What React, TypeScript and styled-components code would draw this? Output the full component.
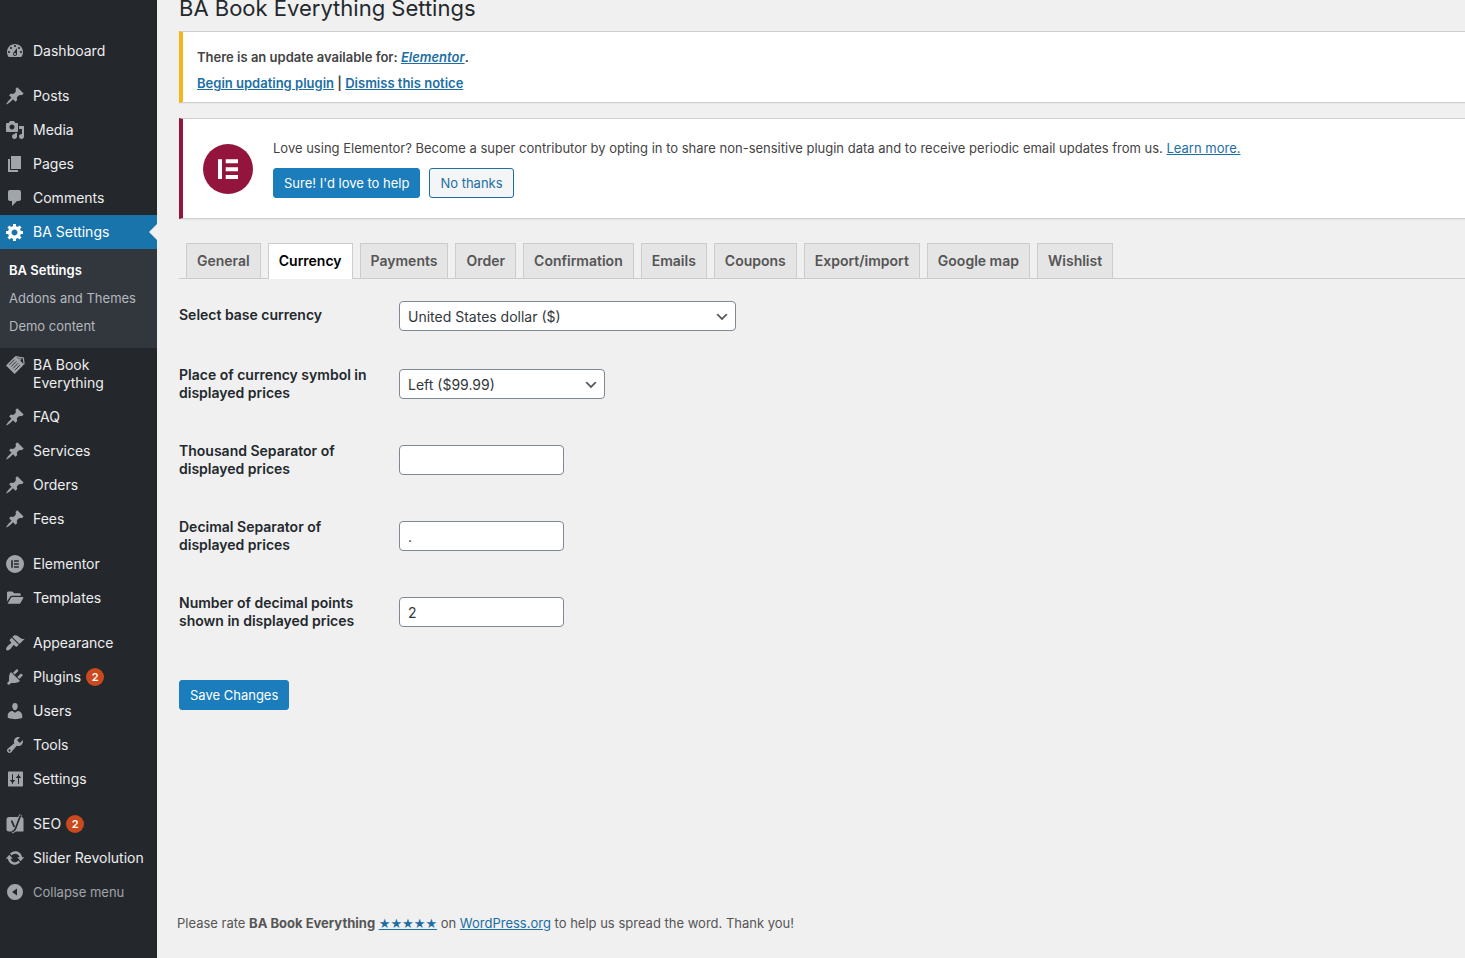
import React from "react";
import styled, { createGlobalStyle, css } from "styled-components";

const GlobalStyle = createGlobalStyle`
  *, *::before, *::after { box-sizing: border-box; }
  body {
    margin: 0;
    background: #f0f0f0;
    color: #444;
    font-family: Inter, "Liberation Sans", sans-serif;
    font-size: 13px;
    line-height: 20px;
  }
  a { color: #1c6ea4; }
`;

const Shell = styled.div`
  display: flex;
  min-height: 100vh;
`;

/* ---------- Sidebar ---------- */

const Sidebar = styled.nav`
  flex: none;
  width: 157px;
  padding-top: 34px;
  background: #24282d;
`;

const MenuList = styled.ul`
  margin: 0;
  padding: 0;
  list-style: none;
`;

const MenuItem = styled.li<{ $spaced?: boolean }>`
  margin-top: ${(p) => (p.$spaced ? "11px" : "0")};
`;

const menuEntry = css`
  position: relative;
  display: flex;
  align-items: flex-start;
  gap: 8px;
  width: 100%;
  padding: 8px 8px 8px 5px;
  font-family: inherit;
  font-size: 14px;
  line-height: 18px;
  text-align: left;
  text-decoration: none;
`;

const MenuLink = styled.a<{ $active?: boolean }>`
  ${menuEntry}
  color: ${(p) => (p.$active ? "#fff" : "#eee")};
  background: ${(p) => (p.$active ? "#1874ab" : "transparent")};

  svg { color: ${(p) => (p.$active ? "#fff" : "#a0a5aa")}; }

  &::after {
    content: "";
    display: ${(p) => (p.$active ? "block" : "none")};
    position: absolute;
    top: 9px;
    right: 0;
    border: 8px solid transparent;
    border-left-width: 0;
    border-right-color: #f0f0f0;
  }
`;

const CollapseButton = styled.button`
  ${menuEntry}
  border: 0;
  background: transparent;
  color: #a0a5aa;
  font-size: 13px;
`;

const MenuIcon = styled.svg`
  flex: none;
  display: block;
  width: 20px;
  height: 20px;
  margin: -1px 0;
  fill: currentColor;
`;

const MenuText = styled.span`
  display: flex;
  align-items: center;
  gap: 5px;
`;

const Badge = styled.span`
  width: 18px;
  height: 18px;
  border-radius: 9px;
  background: #ca4a1f;
  color: #fff;
  font-size: 11px;
  font-weight: 600;
  text-align: center;
`;

const SubMenu = styled.ul`
  margin: 0;
  padding: 7px 0 8px;
  list-style: none;
  background: #32363d;
`;

const SubLink = styled.a<{ $current?: boolean }>`
  display: block;
  padding: 5px 9px;
  line-height: 18px;
  text-decoration: none;
  color: ${(p) => (p.$current ? "#fff" : "#b4b9be")};
  font-weight: ${(p) => (p.$current ? 600 : 400)};
`;

/* ---------- Content ---------- */

const Main = styled.main`
  display: flex;
  flex: 1;
  flex-direction: column;
  min-width: 0;
  padding-left: 22px;
`;

const Title = styled.h1`
  margin: 0 0 15px;
  color: #23282d;
  font-size: 22px;
  font-weight: 400;
  line-height: 16px;
`;

const Notice = styled.section<{ $accent: string }>`
  border: 1px solid #ccd0d4;
  border-right: 0;
  border-left: 4px solid ${(p) => p.$accent};
  background: #fff;
  box-shadow: 0 1px 1px rgba(0, 0, 0, 0.04);
`;

const UpdateNotice = styled(Notice)`
  margin-bottom: 15px;
  padding: 15px 14px 3px;
  font-weight: 600;

  p { margin: 0 0 6px; }
`;

const TrackingNotice = styled(Notice)`
  display: flex;
  gap: 20px;
  margin-bottom: 24px;
  padding: 19px 20px 20px;
`;

const BrandMark = styled.svg`
  flex: none;
  width: 50px;
  height: 50px;
  margin-top: 6px;
`;

const NoticeBody = styled.div`
  p { margin: 0 0 10px; }
`;

const Actions = styled.div`
  display: flex;
  gap: 9px;
`;

const Button = styled.button<{ $primary?: boolean }>`
  height: 30px;
  padding: 0 10px;
  border: 1px solid ${(p) => (p.$primary ? "#1b7dbb" : "#1c6ea4")};
  border-radius: 3px;
  background: ${(p) => (p.$primary ? "#1b7dbb" : "#f3f5f6")};
  color: ${(p) => (p.$primary ? "#fff" : "#1c6ea4")};
  font-family: inherit;
  font-size: 13px;
  font-weight: 400;
  line-height: 20px;
`;

const Tabs = styled.nav`
  display: flex;
  gap: 7px;
  padding-left: 7px;
  border-bottom: 1px solid #ccc;
`;

const Tab = styled.a<{ $active?: boolean }>`
  margin-bottom: ${(p) => (p.$active ? "-1px" : "0")};
  padding: 7px 10px ${(p) => (p.$active ? "8px" : "7px")};
  border: 1px solid #ccc;
  border-bottom: 0;
  background: ${(p) => (p.$active ? "#fff" : "#e5e5e5")};
  color: ${(p) => (p.$active ? "#000" : "#555")};
  font-size: 14px;
  font-weight: 600;
  text-decoration: none;
  white-space: nowrap;
`;

const Form = styled.form`
  padding-top: 7px;
`;

const Field = styled.div`
  display: grid;
  grid-template-columns: 220px 1fr;
`;

const Label = styled.label`
  padding: 20px 10px 20px 0;
  color: #23282d;
  font-size: 14px;
  font-weight: 600;
  line-height: 18px;
`;

const Control = styled.div`
  align-self: center;
  padding: 15px 0;
`;

const box = css`
  display: block;
  width: 100%;
  height: 30px;
  padding: 0 8px;
  border: 1px solid #7e8993;
  border-radius: 4px;
  background: #fff;
  color: #32373c;
  font-family: inherit;
  font-size: 14px;
`;

const TextInput = styled.input`
  ${box}
  width: 165px;
`;

const SelectWrap = styled.div<{ $width: number }>`
  position: relative;
  width: ${(p) => p.$width}px;
`;

const Select = styled.select`
  ${box}
  appearance: none;
`;

const Chevron = styled.svg`
  position: absolute;
  top: 8px;
  right: 6px;
  width: 16px;
  height: 16px;
  fill: #555;
  pointer-events: none;
`;

const Submit = styled.div`
  padding: 30px 0;
`;

const Footer = styled.footer`
  margin: auto 0 0 -2px;
  padding-bottom: 24px;
  color: #555;
`;

const Stars = styled.a`
  font-family: "DejaVu Sans", sans-serif;
`;

/* ---------- Icons ---------- */

const icons: Record<string, React.ReactNode> = {
  dashboard: (
    <path d="M3.76 16h12.48c1.1-1.37 1.76-3.11 1.76-5 0-4.42-3.58-8-8-8s-8 3.58-8 8c0 1.89.66 3.63 1.76 5zM10 4c.55 0 1 .45 1 1s-.45 1-1 1-1-.45-1-1 .45-1 1-1zM6 6c.55 0 1 .45 1 1s-.45 1-1 1-1-.45-1-1 .45-1 1-1zm8 0c.55 0 1 .45 1 1s-.45 1-1 1-1-.45-1-1 .45-1 1-1zm-5.37 5.55L12 7v6c0 1.1-.9 2-2 2s-2-.9-2-2c0-.57.24-1.08.63-1.45zM4 10c.55 0 1 .45 1 1s-.45 1-1 1-1-.45-1-1 .45-1 1-1zm12 0c.55 0 1 .45 1 1s-.45 1-1 1-1-.45-1-1 .45-1 1-1zm-5 3c0-.55-.45-1-1-1s-1 .45-1 1 .45 1 1 1 1-.45 1-1z" />
  ),
  pin: (
    <path d="M10.44 3.02l1.82-1.82 6.36 6.35-1.83 1.82c-1.05-.68-2.48-.57-3.41.36l-.75.75c-.92.93-1.04 2.35-.35 3.41l-1.83 1.82-2.41-2.41-2.8 2.79c-.42.42-3.38 2.71-3.8 2.29s1.86-3.39 2.28-3.81l2.79-2.79L4.1 9.36l1.83-1.82c1.05.69 2.48.57 3.4-.36l.75-.75c.93-.92 1.05-2.35.36-3.41z" />
  ),
  media: (
    <path d="M13 11V4c0-.55-.45-1-1-1h-1.67L9 1H5L3.67 3H2c-.55 0-1 .45-1 1v7c0 .55.45 1 1 1h10c.55 0 1-.45 1-1zM7 4.5c1.38 0 2.5 1.12 2.5 2.5S8.38 9.5 7 9.5 4.5 8.38 4.5 7 5.62 4.5 7 4.5zM14 6h5v10.5c0 1.38-1.12 2.5-2.5 2.5S14 17.88 14 16.5s1.12-2.5 2.5-2.5c.17 0 .34.02.5.05V9h-3V6zm-4 8.05V13h2v3.5c0 1.38-1.12 2.5-2.5 2.5S7 17.88 7 16.5 8.12 14 9.5 14c.17 0 .34.02.5.05z" />
  ),
  page: <path d="M6 15V2h10v13H6zm-1 1h8v2H3V5h2v11z" />,
  comment: (
    <path d="M5 2h9c1.1 0 2 .9 2 2v7c0 1.1-.9 2-2 2h-2l-5 5v-5H5c-1.1 0-2-.9-2-2V4c0-1.1.9-2 2-2z" />
  ),
  gear: (
    <path d="M18 12h-2.18c-.17.7-.44 1.35-.81 1.93l1.54 1.54-2.1 2.1-1.54-1.54c-.58.36-1.23.63-1.91.79V19H8v-2.18c-.68-.16-1.33-.43-1.91-.79l-1.54 1.54-2.12-2.12 1.54-1.54c-.36-.58-.63-1.23-.79-1.91H1V9.03h2.17c.16-.7.44-1.35.8-1.94L2.43 5.55l2.1-2.1 1.54 1.54c.58-.37 1.24-.64 1.93-.81V2h3v2.18c.68.16 1.33.43 1.91.79l1.54-1.54 2.12 2.12-1.54 1.54c.36.59.64 1.24.8 1.94H18V12zm-8.5 1.5c1.66 0 3-1.34 3-3s-1.34-3-3-3-3 1.34-3 3 1.34 3 3 3z" />
  ),
  booking: (
    <>
      <path d="M10.4 1 1 10.4l8.600 8.600L18 10.600l.3-1.900z" />
      <g fill="none" stroke="#24282d" strokeWidth=".9">
        <path d="M9.600 4.600 4.400 9.800M11.400 6.400l-5.200 5.200M13.200 8.200 8 13.400M15 10l-5.200 5.200" />
      </g>
      <path
        d="M11 1.600 14.600 2.400l3.800.600.6 5.800-.8.800M14.400 5.600l1.800-1.800M14.200 2.600l-.6 2.600"
        fill="none"
        stroke="currentColor"
        strokeWidth="1.200"
      />
    </>
  ),
  elementor: (
    <path
      fillRule="evenodd"
      d="M10 1a9 9 0 1 0 0 18 9 9 0 0 0 0-18zM6.2 6.2h1.6v7.6H6.2zM9 6.2h4.8v1.6H9zM9 9.2h4.8v1.6H9zM9 12.2h4.8v1.6H9z"
    />
  ),
  folder: (
    <>
      <path d="M2 13.6V4.8c0-.8.6-1.4 1.4-1.4h4l1.8 1.8h5.2c.8 0 1.4.6 1.4 1.4v1.2H7.2c-1 0-1.8.5-2.3 1.3z" />
      <path d="M2.6 15.8 5.8 10c.3-.6.8-.9 1.4-.9h10.4c.6 0 .9.6.6 1.1l-2.7 4.7c-.3.6-.8.9-1.4.9z" />
    </>
  ),
  brush: (
    <path d="M14.48 11.06L7.41 3.99l1.5-1.5c.5-.56 2.3-.47 3.51.32 1.21.8 1.43 1.28 2.91 2.1 1.18.64 2.45 1.26 4.45.85zm-.71.71L6.7 4.7 4.93 6.47c-.39.39-.39 1.02 0 1.41l1.06 1.06c.39.39.39 1.03 0 1.42-.6.6-1.43 1.11-2.21 1.69-.35.26-.7.53-1.01.84C1.43 14.23.4 16.08 1.4 17.07c.99 1 2.84-.03 4.18-1.36.31-.31.58-.66.85-1.02.57-.78 1.08-1.61 1.69-2.21.39-.39 1.02-.39 1.41 0l1.06 1.06c.39.39 1.02.39 1.41 0z" />
  ),
  plug: (
    <path d="M13.11 4.36L9.87 7.6 8 5.73l3.24-3.24c.35-.34 1.05-.2 1.56.32.52.51.66 1.21.31 1.55zm-8 1.77l.91-1.12 9.01 9.01-1.19.84c-.71.71-2.63 1.16-3.82 1.16H6.14L4.9 17.26c-.59.59-1.54.59-2.12 0-.59-.58-.59-1.53 0-2.12l1.24-1.24v-3.88c0-1.13.4-3.19 1.09-3.89zm7.26 3.97l3.24-3.24c.34-.35 1.04-.21 1.55.31.52.51.66 1.21.31 1.55l-3.24 3.25z" />
  ),
  user: (
    <path d="M10 9.25c-2.27 0-2.73-3.44-2.73-3.44C7 4.02 7.82 2 9.97 2c2.16 0 2.98 2.02 2.71 3.81 0 0-.41 3.44-2.68 3.44zm0 2.57L12.72 10c2.39 0 4.52 2.33 4.52 4.53v2.49s-3.65 1.13-7.24 1.13c-3.65 0-7.24-1.13-7.24-1.13v-2.49c0-2.25 1.94-4.48 4.47-4.48z" />
  ),
  wrench: (
    <path d="M16.68 9.77c-1.34 1.34-3.3 1.67-4.95.99l-5.41 6.52c-.99.99-2.59.99-3.58 0s-.99-2.59 0-3.57l6.52-5.42c-.68-1.65-.35-3.61.99-4.95 1.28-1.28 3.12-1.62 4.72-1.06l-2.89 2.89 2.82 2.82 2.86-2.87c.53 1.58.18 3.39-1.08 4.65zM3.81 16.21c.4.39 1.04.39 1.43 0 .4-.4.4-1.04 0-1.43-.39-.4-1.03-.4-1.43 0-.39.39-.39 1.03 0 1.43z" />
  ),
  sliders: (
    <path d="M18 16.5v-13c0-.6-.4-1-1-1H4c-.6 0-1 .4-1 1v13c0 .6.4 1 1 1h13c.6 0 1-.4 1-1zM8 11h1.5c.4 0 .5.5.3.8L8 13.6v.9c0 .3-.2.5-.5.5s-.5-.2-.5-.5v-.9l-1.8-1.8c-.3-.3-.1-.8.3-.8H7V5.5c0-.3.2-.5.5-.5s.5.2.5.5zm5-2h-1.5c-.4 0-.5-.5-.3-.8L13 6.4v-.9c0-.3.2-.5.5-.5s.5.2.5.5v.9l1.8 1.8c.3.3.1.8-.3.8H14v5.5c0 .3-.2.5-.5.5s-.5-.2-.5-.5z" />
  ),
  yoast: (
    <>
      <path d="M4 3h12a2.500 2.500 0 0 1 2.500 2.500V17.500H4A2.500 2.500 0 0 1 1.500 15V5.500A2.500 2.500 0 0 1 4 3z" />
      <g fill="none" strokeLinejoin="round">
        <path d="M15.600.8 10.400 14.800c-.7 1.900-1.600 2.900-3.600 3.200" stroke="currentColor" strokeWidth="3" />
        <path
          d="m6.600 6.600 2.700 6.400M15.600 1.200 10.400 14.800c-.7 1.900-1.600 2.700-3.600 3"
          stroke="#24282d"
          strokeWidth="1.700"
        />
      </g>
    </>
  ),
  refresh: (
    <path d="M10.2 3.28c3.53 0 6.43 2.61 6.92 6h2.08l-3.5 4-3.5-4h2.32c-.45-1.97-2.21-3.45-4.32-3.45-1.45 0-2.73.71-3.54 1.78L4.95 5.66C6.23 4.2 8.11 3.28 10.2 3.28zm-.4 13.44c-3.52 0-6.43-2.61-6.92-6H.8l3.5-4c1.17 1.33 2.33 2.67 3.5 4H5.48c.45 1.97 2.21 3.45 4.32 3.45 1.45 0 2.73-.71 3.54-1.78l1.71 1.95c-1.28 1.46-3.15 2.38-5.25 2.38z" />
  ),
  collapse: (
    <path fillRule="evenodd" d="M10 2a8 8 0 1 0 0 16 8 8 0 0 0 0-16zm2 4.500v7L7 10z" />
  ),
};

const Icon = ({ name }: { name: string }) => (
  <MenuIcon viewBox="0 0 20 20" aria-hidden="true">
    {icons[name]}
  </MenuIcon>
);

/* ---------- Data ---------- */

type Entry = {
  label: string;
  icon: string;
  spaced?: boolean;
  active?: boolean;
  count?: number;
  children?: string[];
};

const menu: Entry[] = [
  { label: "Dashboard", icon: "dashboard" },
  { label: "Posts", icon: "pin", spaced: true },
  { label: "Media", icon: "media" },
  { label: "Pages", icon: "page" },
  { label: "Comments", icon: "comment" },
  {
    label: "BA Settings",
    icon: "gear",
    active: true,
    children: ["BA Settings", "Addons and Themes", "Demo content"],
  },
  { label: "BA Book Everything", icon: "booking" },
  { label: "FAQ", icon: "pin" },
  { label: "Services", icon: "pin" },
  { label: "Orders", icon: "pin" },
  { label: "Fees", icon: "pin" },
  { label: "Elementor", icon: "elementor", spaced: true },
  { label: "Templates", icon: "folder" },
  { label: "Appearance", icon: "brush", spaced: true },
  { label: "Plugins", icon: "plug", count: 2 },
  { label: "Users", icon: "user" },
  { label: "Tools", icon: "wrench" },
  { label: "Settings", icon: "sliders" },
  { label: "SEO", icon: "yoast", spaced: true, count: 2 },
  { label: "Slider Revolution", icon: "refresh" },
];

const tabs = [
  "General",
  "Currency",
  "Payments",
  "Order",
  "Confirmation",
  "Emails",
  "Coupons",
  "Export/import",
  "Google map",
  "Wishlist",
];

const DropDown = ({ id, width, option }: { id: string; width: number; option: string }) => (
  <SelectWrap $width={width}>
    <Select id={id}>
      <option>{option}</option>
    </Select>
    <Chevron viewBox="0 0 20 20" aria-hidden="true">
      <path d="M5 6l5 5 5-5 2 1-7 7-7-7 2-1z" />
    </Chevron>
  </SelectWrap>
);

export default function App() {
  return (
    <>
      <GlobalStyle />
      <Shell>
        <Sidebar aria-label="Main menu">
          <MenuList>
            {menu.map((item) => (
              <MenuItem key={item.label} $spaced={item.spaced}>
                <MenuLink href="#" $active={item.active}>
                  <Icon name={item.icon} />
                  <MenuText>
                    {item.label}
                    {item.count && <Badge>{item.count}</Badge>}
                  </MenuText>
                </MenuLink>
                {item.children && (
                  <SubMenu>
                    {item.children.map((child, i) => (
                      <li key={child}>
                        <SubLink href="#" $current={i === 0}>
                          {child}
                        </SubLink>
                      </li>
                    ))}
                  </SubMenu>
                )}
              </MenuItem>
            ))}
            <MenuItem>
              <CollapseButton type="button">
                <Icon name="collapse" />
                Collapse menu
              </CollapseButton>
            </MenuItem>
          </MenuList>
        </Sidebar>

        <Main>
          <Title>BA Book Everything Settings</Title>

          <UpdateNotice $accent="#f3b61f">
            <p>
              There is an update available for:{" "}
              <a href="#">
                <em>Elementor</em>
              </a>
              .
            </p>
            <p>
              <a href="#">Begin updating plugin</a> | <a href="#">Dismiss this notice</a>
            </p>
          </UpdateNotice>

          <TrackingNotice $accent="#93163d">
            <BrandMark viewBox="0 0 50 50" aria-hidden="true">
              <circle cx="25" cy="25" r="25" fill="#93143c" />
              <path
                fill="#fff"
                d="M15 15.3h4V35h-4zM22.7 15.300H35v4H22.700zM22.700 23.200H35v4H22.700zM22.700 31H35v4H22.700z"
              />
            </BrandMark>
            <NoticeBody>
              <p>
                Love using Elementor? Become a super contributor by opting in to share
                non-sensitive plugin data and to receive periodic email updates from us.{" "}
                <a href="#">Learn more.</a>
              </p>
              <Actions>
                <Button type="button" $primary>
                  Sure! I'd love to help
                </Button>
                <Button type="button">No thanks</Button>
              </Actions>
            </NoticeBody>
          </TrackingNotice>

          <Tabs aria-label="Settings sections">
            {tabs.map((tab) => (
              <Tab key={tab} href="#" $active={tab === "Currency"}>
                {tab}
              </Tab>
            ))}
          </Tabs>

          <Form onSubmit={(e) => e.preventDefault()}>
            <Field>
              <Label htmlFor="currency">Select base currency</Label>
              <Control>
                <DropDown id="currency" width={337} option="United States dollar ($)" />
              </Control>
            </Field>
            <Field>
              <Label htmlFor="place">Place of currency symbol in displayed prices</Label>
              <Control>
                <DropDown id="place" width={206} option="Left ($99.99)" />
              </Control>
            </Field>
            <Field>
              <Label htmlFor="thousand">Thousand Separator of displayed prices</Label>
              <Control>
                <TextInput id="thousand" type="text" />
              </Control>
            </Field>
            <Field>
              <Label htmlFor="decimal">Decimal Separator of displayed prices</Label>
              <Control>
                <TextInput id="decimal" type="text" defaultValue="." />
              </Control>
            </Field>
            <Field>
              <Label htmlFor="points">Number of decimal points shown in displayed prices</Label>
              <Control>
                <TextInput id="points" type="text" defaultValue="2" />
              </Control>
            </Field>
            <Submit>
              <Button type="submit" $primary>
                Save Changes
              </Button>
            </Submit>
          </Form>

          <Footer>
            Please rate <strong>BA Book Everything</strong>{" "}
            <Stars href="#">★★★★★</Stars> on <a href="#">WordPress.org</a> to help us spread
            the word. Thank you!
          </Footer>
        </Main>
      </Shell>
    </>
  );
}
